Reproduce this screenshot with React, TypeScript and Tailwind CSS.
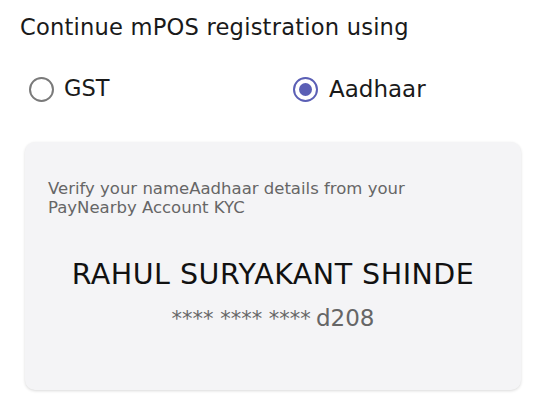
export default function App() {
  return (
    <div className="h-[412px] w-[540px] bg-white font-['DejaVu_Sans',sans-serif] text-[#1a1a1a]">
      <div className="px-5 pt-[13px]">
        <p className="text-[22.6px] leading-[28px] tracking-[0.2px]">Continue mPOS registration using</p>

        {/* radio options */}
        <div className="mt-[31px] flex items-center">
          <label className="flex w-[264px] items-center gap-[10px] pl-[9px]">
            <span className="h-[25px] w-[25px] rounded-full border-[2.5px] border-[#7a7a7a]" />
            <span className="text-[22.5px] font-medium">GST</span>
          </label>
          <label className="flex items-center gap-[11px] pl-[9px]">
            <span className="flex h-[25px] w-[25px] items-center justify-center rounded-full border-[2.5px] border-[#5b5fb5]">
              <span className="h-[13px] w-[13px] rounded-full bg-[#5b5fb5]" />
            </span>
            <span className="text-[23px] font-medium">Aadhaar</span>
          </label>
        </div>
      </div>

      {/* KYC card */}
      <div className="ml-[25px] mr-[19px] mt-[35px] h-[248px] rounded-[10px] bg-[#f4f4f6] px-[23px] pt-[37px] shadow-[0_1px_3px_rgba(0,0,0,0.15)]">
        <p className="text-[16.5px] leading-[19px] text-[#666]">
          Verify your nameAadhaar details from your
          <br />
          PayNearby Account KYC
        </p>
        <p className="mt-[41px] text-center text-[28.5px] font-medium leading-[34px] tracking-[0.5px] text-[#111]">
          RAHUL SURYAKANT SHINDE
        </p>
        <p className="mt-[12px] text-center leading-[28px] text-[#666]">
          <span className="text-[21px]">**** **** ****</span>{' '}
          <span className="text-[23px]">d208</span>
        </p>
      </div>
    </div>
  );
}
